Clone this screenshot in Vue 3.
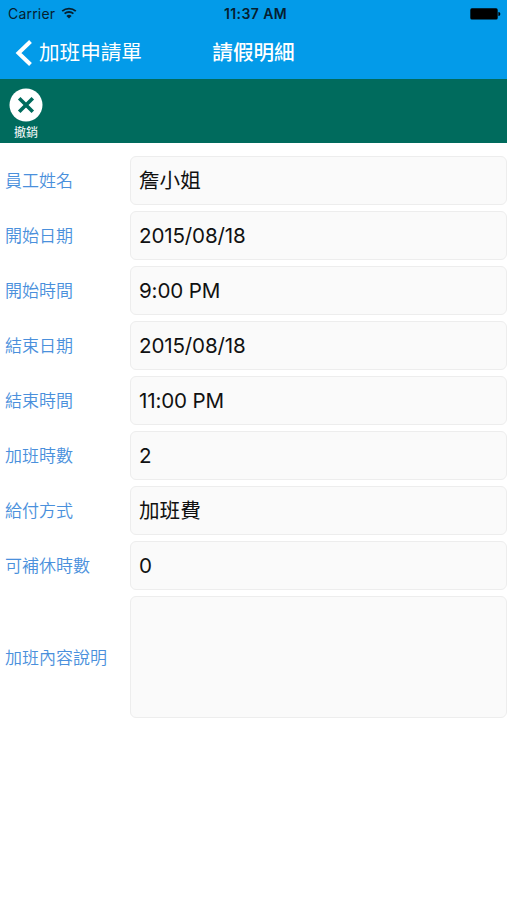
<template>
	<div class="screen">
		<header class="top">
			<div class="status-bar">
				<div class="carrier">
					<span>Carrier</span>
					<svg class="wifi" viewBox="0 0 16 12" width="16" height="12">
						<path d="M1.2 4.2A10 10 0 0 1 14.8 4.2" />
						<path d="M3.6 6.7A6.5 6.5 0 0 1 12.4 6.7" />
						<path class="dot" d="M8 11.6L5.4 9A3.8 3.8 0 0 1 10.6 9Z" />
					</svg>
				</div>
				<span class="clock">11:37 AM</span>
				<svg class="battery" viewBox="0 0 31 12" width="31" height="12">
					<rect x="0.3" y="0.3" width="27.4" height="11.2" rx="1.6" />
					<path d="M28.4 4a2 2 0 0 1 0 4z" />
				</svg>
			</div>
			<nav class="nav-bar">
				<button class="back" @click="goBack">
					<svg viewBox="0 0 18 28" width="18" height="28">
						<path d="M15.5 2.5L3.5 14L15.5 25.5" />
					</svg>
					<span>加班申請單</span>
				</button>
				<h1 class="title">請假明細</h1>
			</nav>
		</header>

		<div class="toolbar">
			<button class="revoke" @click="revoke">
				<svg viewBox="0 0 34 34" width="34" height="34">
					<circle cx="17" cy="17" r="16.5" />
					<path d="M10.2 10.2L23.8 23.8M23.8 10.2L10.2 23.8" />
				</svg>
				<span>撤銷</span>
			</button>
		</div>

		<main class="form">
			<div v-for="field in fields" :key="field.label" class="row" :class="{ tall: field.multiline }">
				<span class="label">{{ field.label }}</span>
				<div class="value" :class="{ latin: field.latin }">{{ field.value }}</div>
			</div>
		</main>
	</div>
</template>

<script setup>
	import { ref } from "vue"

	const emit = defineEmits(["back", "revoke"])

	const fields = ref([
		{ label: "員工姓名", value: "詹小姐" },
		{ label: "開始日期", value: "2015/08/18", latin: true },
		{ label: "開始時間", value: "9:00 PM", latin: true },
		{ label: "結束日期", value: "2015/08/18", latin: true },
		{ label: "結束時間", value: "11:00 PM", latin: true },
		{ label: "加班時數", value: "2", latin: true },
		{ label: "給付方式", value: "加班費" },
		{ label: "可補休時數", value: "0", latin: true },
		{ label: "加班內容說明", value: "", multiline: true },
	])

	const goBack = () => {
		emit("back")
	}

	const revoke = () => {
		emit("revoke")
	}
</script>

<style>
	body {
		margin: 0;
		background: #fff;
	}
</style>

<style scoped>
	.screen {
		min-height: 900px;
		background: #fff;
		font-family: Inter, "Noto Sans CJK TC", sans-serif;
		color: #111;
	}
	button {
		padding: 0;
		border: none;
		background: none;
		color: #fff;
		font-family: inherit;
	}
	.top {
		height: 79px;
		background: #039be9;
	}
	.status-bar {
		display: grid;
		grid-template-columns: 1fr auto 1fr;
		align-items: center;
		height: 27px;
		padding: 0 6px 0 8px;
		font-size: 14px;
		color: #06202f;
	}
	.carrier {
		display: flex;
		align-items: center;
		gap: 6px;
		letter-spacing: 0.2px;
	}
	.wifi {
		margin-top: -2px;
		fill: none;
		stroke: #06202f;
		stroke-width: 1.8;
	}
	.wifi .dot {
		fill: #06202f;
		stroke: none;
	}
	.clock {
		padding-left: 2px;
		font-weight: 600;
		letter-spacing: 0.4px;
	}
	.battery {
		justify-self: end;
		fill: #000;
	}
	.nav-bar {
		display: grid;
		grid-template-columns: 1fr auto 1fr;
		align-items: center;
		height: 52px;
	}
	.back {
		display: flex;
		align-items: center;
		gap: 6px;
		padding-left: 15px;
		font-size: 20.6px;
		line-height: 30px;
	}
	.back svg {
		fill: none;
		stroke: #fff;
		stroke-width: 4;
	}
	.title {
		margin: 0;
		font-size: 20.6px;
		font-weight: 500;
		line-height: 30px;
		color: #fff;
	}
	.toolbar {
		height: 63.5px;
		padding: 8.5px 0 0 9px;
		box-sizing: border-box;
		background: #006b5d;
	}
	.revoke {
		display: flex;
		flex-direction: column;
		align-items: center;
		gap: 3px;
		font-size: 12px;
		line-height: 16px;
	}
	.revoke circle {
		fill: #fff;
	}
	.revoke path {
		stroke: #006b5d;
		stroke-width: 3.6;
	}
	.form {
		display: flex;
		flex-direction: column;
		gap: 6px;
		padding-top: 13.5px;
	}
	.row {
		display: grid;
		grid-template-columns: 125px 1fr;
		align-items: center;
		height: 49px;
		padding-left: 5px;
	}
	.tall {
		height: 122px;
	}
	.label {
		padding-bottom: 2px;
		font-size: 17px;
		font-weight: 350;
		color: #4a90dc;
	}
	.value {
		display: flex;
		align-items: center;
		height: 100%;
		box-sizing: border-box;
		padding: 0 0 3px 8px;
		border: 1px solid #ededed;
		border-radius: 6px;
		background: #fafafa;
		font-size: 20.6px;
	}
	.latin {
		padding-bottom: 1px;
		letter-spacing: -0.15px;
	}
</style>
